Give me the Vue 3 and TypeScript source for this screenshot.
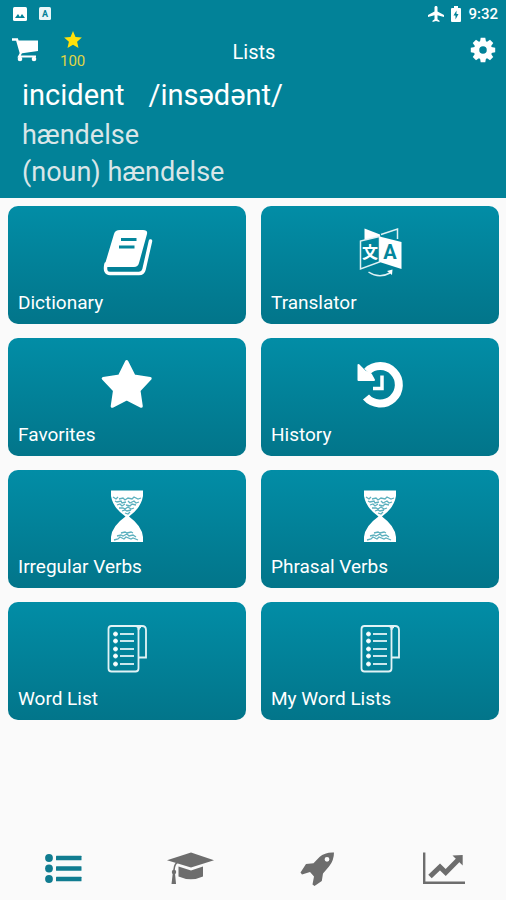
<script setup lang="ts">
import { ref } from 'vue'

type IconName = 'book' | 'translate' | 'star' | 'history' | 'hourglass' | 'list'

interface Tile {
  label: string
  icon: IconName
}

const tiles: Tile[] = [
  { label: 'Dictionary', icon: 'book' },
  { label: 'Translator', icon: 'translate' },
  { label: 'Favorites', icon: 'star' },
  { label: 'History', icon: 'history' },
  { label: 'Irregular Verbs', icon: 'hourglass' },
  { label: 'Phrasal Verbs', icon: 'hourglass' },
  { label: 'Word List', icon: 'list' },
  { label: 'My Word Lists', icon: 'list' },
]

const tabs = ['Lists', 'Learn', 'Practice', 'Progress'] as const
const activeTab = ref<string>('Lists')
const points = ref(100)
const rowYs = [16, 23, 31, 38, 46]
</script>

<template>
  <div class="screen">
    <header class="header">
      <div class="status">
        <div class="status-group">
          <svg class="status-icon" viewBox="0 0 16 16" aria-hidden="true">
            <rect x="1" y="1" width="14" height="14" rx="1.5" fill="#fff" />
            <path d="M3 12l3-4 2 3 2-3 3 4z" fill="#028298" />
          </svg>
          <svg class="status-icon" viewBox="0 0 16 16" aria-hidden="true">
            <rect x="1" y="1" width="12" height="13" rx="1.5" fill="#e9f6f8" />
            <text x="7" y="11" text-anchor="middle" class="tiny-letter">A</text>
          </svg>
        </div>
        <div class="status-group right">
          <svg class="status-icon" viewBox="0 0 16 16" aria-hidden="true">
            <path d="M8 0c-.9 0-1.500.6-1.500 1.300V5.500L0 9V11l6.500-1.700v3.900L4.500 14.700V16l3.500-.9 3.500.9v-1.300l-2-1.500V9.300L16 11V9L9.500 5.500V1.300C9.500.6 8.900 0 8 0z" fill="#fff" />
          </svg>
          <svg class="battery" viewBox="0 0 12 18" aria-hidden="true">
            <path d="M4 1h4v2h2q1 0 1 1v12q0 1-1 1H2q-1 0-1-1V4q0-1 1-1h2z" fill="#fff" />
            <path d="M6.500 5.500L3.500 10.500H5.500V14.500L8.500 9H6.500z" fill="#028298" />
          </svg>
          <span class="time">9:32</span>
        </div>
      </div>

      <div class="toolbar">
        <div class="tools">
          <button class="plain" type="button" aria-label="Shop">
            <svg class="cart" viewBox="0 0 28 24" aria-hidden="true">
              <path d="M0 1.500H5L9 15.500" fill="none" stroke="#fff" stroke-width="2.400" />
              <path d="M5 2.500H26V13L8.500 15.500z" fill="#fff" />
              <path d="M9 15L7 18.500H24" fill="none" stroke="#fff" stroke-width="2" />
              <circle cx="8" cy="21" r="2.300" fill="#fff" />
              <circle cx="22" cy="21" r="2.300" fill="#fff" />
            </svg>
          </button>
          <button class="plain points" type="button">
            <svg class="coin" viewBox="0 0 18 17" aria-hidden="true">
              <path d="M9 0l2.500 5.900 6.400.6-4.800 4.200 1.400 6.300L9 13.700 3.500 17l1.400-6.300L.1 6.500l6.400-.6z" fill="#ffe10a" />
            </svg>
            <span>{{ points }}</span>
          </button>
        </div>
        <h1 class="title">Lists</h1>
        <button class="plain settings" type="button" aria-label="Settings">
          <svg class="gear" viewBox="-13 -13 26 26" aria-hidden="true">
            <g fill="#fff">
              <path v-for="n in 8" :key="n" d="M-3.200 -7L-2.300 -12.200H2.300L3.200 -7z" :transform="`rotate(${n * 45})`" />
            </g>
            <circle r="6.500" fill="none" stroke="#fff" stroke-width="5.500" />
          </svg>
        </button>
      </div>

      <section class="entry">
        <p class="word"><span>incident</span><span>/insədənt/</span></p>
        <p class="meaning">hændelse</p>
        <p class="meaning">(noun) hændelse</p>
      </section>
    </header>

    <main class="grid">
      <button v-for="tile in tiles" :key="tile.label" class="tile" type="button">
        <svg class="tile-icon" viewBox="0 0 60 60" aria-hidden="true">
          <g v-if="tile.icon === 'book'">
            <path d="M23 8H46Q51 8 50 12L42 41Q41 45 37 45H9Q7 45 8 42L17 12Q18 8 23 8z" fill="#fff" />
            <path d="M9 42Q7 51.500 13 51.500H42Q46 51.500 47 47.500L53.500 19" fill="none" stroke="#fff" stroke-width="3.500" stroke-linecap="round" />
            <path d="M24 17.500H39.500M22 25H37.500" stroke="#04869c" stroke-width="3" />
          </g>
          <g v-else-if="tile.icon === 'translate'">
            <path d="M14.500 6.500L30 12.500V14.500L14.500 18z" fill="#fff" />
            <path d="M31 12.500L47.500 7V17" fill="none" stroke="#dff1f4" stroke-width="1.500" />
            <path d="M29.500 14.500L10.500 19V47L29.500 40z" fill="none" stroke="#dff1f4" stroke-width="1.500" />
            <path d="M29.500 14.500L51.500 20V47L29.500 40z" fill="#fff" />
            <text x="20" y="36" text-anchor="middle" class="han-letter">文</text>
            <text x="40" y="37" text-anchor="middle" class="latin-letter">A</text>
            <path d="M18.500 50Q29 57 40 51" fill="none" stroke="#dff1f4" stroke-width="1.500" />
            <path d="M37 49L42.500 47.500 42 53z" fill="#fff" />
          </g>
          <path v-else-if="tile.icon === 'star'" d="M29.700 7.500L37 22 53.200 24.500 42 36.500 44.300 52.300 29.700 45 15.200 52.300 17.500 36.500 6.200 24.500 22.500 22z" fill="#fff" stroke="#fff" stroke-width="3" stroke-linejoin="round" />
          <g v-else-if="tile.icon === 'history'">
            <path d="M16 43A18.700 18.700 0 1 0 17 17.500" fill="none" stroke="#fff" stroke-width="8" />
            <path d="M8.500 11L8.500 26H24L21 20.500 15 17.500z" fill="#fff" stroke="#fff" stroke-width="2" stroke-linejoin="round" />
            <path d="M32 21.500V34.500H23" fill="none" stroke="#fff" stroke-width="3.500" />
          </g>
          <g v-else-if="tile.icon === 'hourglass'">
            <path d="M14 4.500H46V10Q44 22 32 30.500Q45 40 46 51V56H14V51Q15 40 28.500 30.500Q16 22 14 10z" fill="#fff" />
            <path
              d="M16 11l3 2 2-2M22 13l4-1 2 2 3-2 4 1 2-2 4 2 3-1M18 15l2 1 4-1 1 2 4-1M31 15l2 2 4-2 2 2 3-1M20 19l3-1 2 2 3-2M29 19l4 1 2-2 4 1M22 22l4 0 2 1 3-2 3 2 3-1M25 25l3-1 2 1 4-1M28 27l3 1 2-2M17 54l4-1 2-2 4 2 2-2 5 2 2-1 5 2M20 50l4-1 2 1 4-2 2 2 4-1 3 2M24 47l4-1 2 1 4-1 2 1"
              fill="none"
              stroke="#5cb0be"
              stroke-width="1.300"
            />
          </g>
          <g v-else fill="none" stroke="#e2f3f6" stroke-width="1.800">
            <rect x="11.500" y="8" width="30" height="45.500" rx="3" />
            <path d="M38 8H45Q49 8 49 12V39.500H42M41.500 12Q41.500 9 44 9" />
            <g v-for="y in rowYs" :key="y">
              <circle cx="18.500" :cy="y" r="2" fill="#fff" stroke-width="1" />
              <path :d="`M23 ${y}H37`" />
            </g>
          </g>
        </svg>
        <span class="tile-label">{{ tile.label }}</span>
      </button>
    </main>

    <nav class="tabs" aria-label="Main">
      <button
        v-for="tab in tabs"
        :key="tab"
        type="button"
        class="plain tab"
        :class="{ active: activeTab === tab }"
        :aria-label="tab"
        @click="activeTab = tab"
      >
        <svg class="tab-icon" viewBox="0 0 48 40" aria-hidden="true">
          <g v-if="tab === 'Lists'" fill="currentColor">
            <g v-for="y in [10, 20.5, 31]" :key="y">
              <circle cx="10" :cy="y" r="3.900" />
              <rect x="17" :y="y - 2.300" width="25.500" height="4.600" rx=".5" />
            </g>
          </g>
          <g v-else-if="tab === 'Learn'" fill="currentColor">
            <path d="M25 4.500L48 12.300 25 19.500 1 12.300z" />
            <path d="M12.500 18.500L25 22.500 37 18.500V28.500Q25 34 12.500 28.500z" />
            <path d="M13 14Q8.500 14.500 8 22" fill="none" stroke="currentColor" stroke-width="1.600" />
            <circle cx="8" cy="24" r="2.200" />
            <path d="M6.800 25H9L10 36H5.500z" />
          </g>
          <path
            v-else-if="tab === 'Practice'"
            fill="currentColor"
            fill-rule="evenodd"
            d="M42 4.500Q33 4 27.500 9L21.500 15.300 14 16 8.500 24.500 10 26.500 18 24 22 28.500 20.500 36.500 22.500 38 29.800 33 31 25.500 37 18.500Q42 12.500 42 4.500zM35 8.900A2.400 2.400 0 1 1 35 13.700A2.400 2.400 0 1 1 35 8.900z"
          />
          <g v-else fill="none" stroke="currentColor">
            <path d="M5.200 4.500V34.700H46" stroke-width="2.400" />
            <path d="M11 28.500L21 19 26.700 24.500 39.500 11.500" stroke-width="5" />
            <path d="M33.500 7.500L43.700 7V17.500z" fill="currentColor" stroke="none" />
          </g>
        </svg>
      </button>
    </nav>
  </div>
</template>

<style>
body {
  margin: 0;
  background: #fafafa;
}
</style>

<style scoped>
.screen {
  display: flex;
  flex-direction: column;
  min-height: 100vh;
  background: #fafafa;
  font-family: Roboto, "Liberation Sans", sans-serif;
  color: #fff;
}

button {
  font: inherit;
  color: inherit;
  cursor: pointer;
}

.plain {
  padding: 0;
  border: 0;
  background: none;
}

svg {
  display: block;
}

.header {
  background: #028298;
  padding-bottom: 7px;
}

.status {
  display: flex;
  justify-content: space-between;
  align-items: center;
  height: 28px;
  padding: 0 8px 0 12px;
}

.status-group {
  display: flex;
  align-items: center;
  gap: 10px;
}

.status-group.right {
  gap: 6px;
}

.status-icon {
  width: 16px;
  height: 16px;
}

.battery {
  width: 12px;
  height: 18px;
}

.tiny-letter {
  font-size: 9px;
  font-weight: 700;
  fill: #028298;
}

.time {
  font-size: 15px;
  font-weight: 500;
}

.toolbar {
  display: grid;
  grid-template-columns: 1fr auto 1fr;
  align-items: center;
  height: 48px;
  padding: 0 10px 0 12px;
}

.tools {
  display: flex;
  align-items: center;
  gap: 20px;
  padding-bottom: 4px;
}

.cart {
  width: 28px;
  height: 24px;
}

.points {
  display: flex;
  flex-direction: column;
  align-items: center;
  gap: 4px;
  font-size: 15px;
  line-height: 18px;
  color: #e0d545;
}

.coin {
  width: 18px;
  height: 17px;
}

.title {
  margin: 0;
  font-size: 20px;
  font-weight: 400;
}

.settings {
  justify-self: end;
  padding-bottom: 4px;
}

.gear {
  width: 26px;
  height: 26px;
}

.entry {
  padding: 0 22px;
}

.entry p {
  margin: 0;
}

.entry .word {
  display: flex;
  gap: 24px;
  margin-bottom: 3px;
  font-size: 29px;
  line-height: 38px;
}

.meaning {
  font-size: 27px;
  line-height: 37px;
  color: #d9e6e8;
}

.grid {
  display: grid;
  grid-template-columns: 1fr 1fr;
  gap: 14px 15px;
  padding: 8px 7px 8px 8px;
}

.tile {
  display: flex;
  flex-direction: column;
  align-items: center;
  justify-content: space-between;
  height: 118px;
  padding: 16px 10px 9px;
  border: 0;
  border-radius: 10px;
  background: linear-gradient(#028da6, #02758a);
}

.tile-icon {
  width: 60px;
  height: 60px;
}

.tile-label {
  align-self: flex-start;
  font-size: 19px;
  line-height: 24px;
}

.han-letter {
  font-family: "Noto Sans CJK JP", sans-serif;
  font-size: 16px;
  font-weight: 700;
  fill: #fff;
}

.latin-letter {
  font-size: 20px;
  font-weight: 700;
  fill: #04869c;
}

.tabs {
  display: grid;
  grid-template-columns: repeat(4, 1fr);
  height: 64px;
  margin-top: auto;
}

.tab {
  display: flex;
  align-items: center;
  justify-content: center;
  color: #6d6d6d;
}

.tab.active {
  color: #107c90;
}

.tab-icon {
  width: 48px;
  height: 40px;
}
</style>
